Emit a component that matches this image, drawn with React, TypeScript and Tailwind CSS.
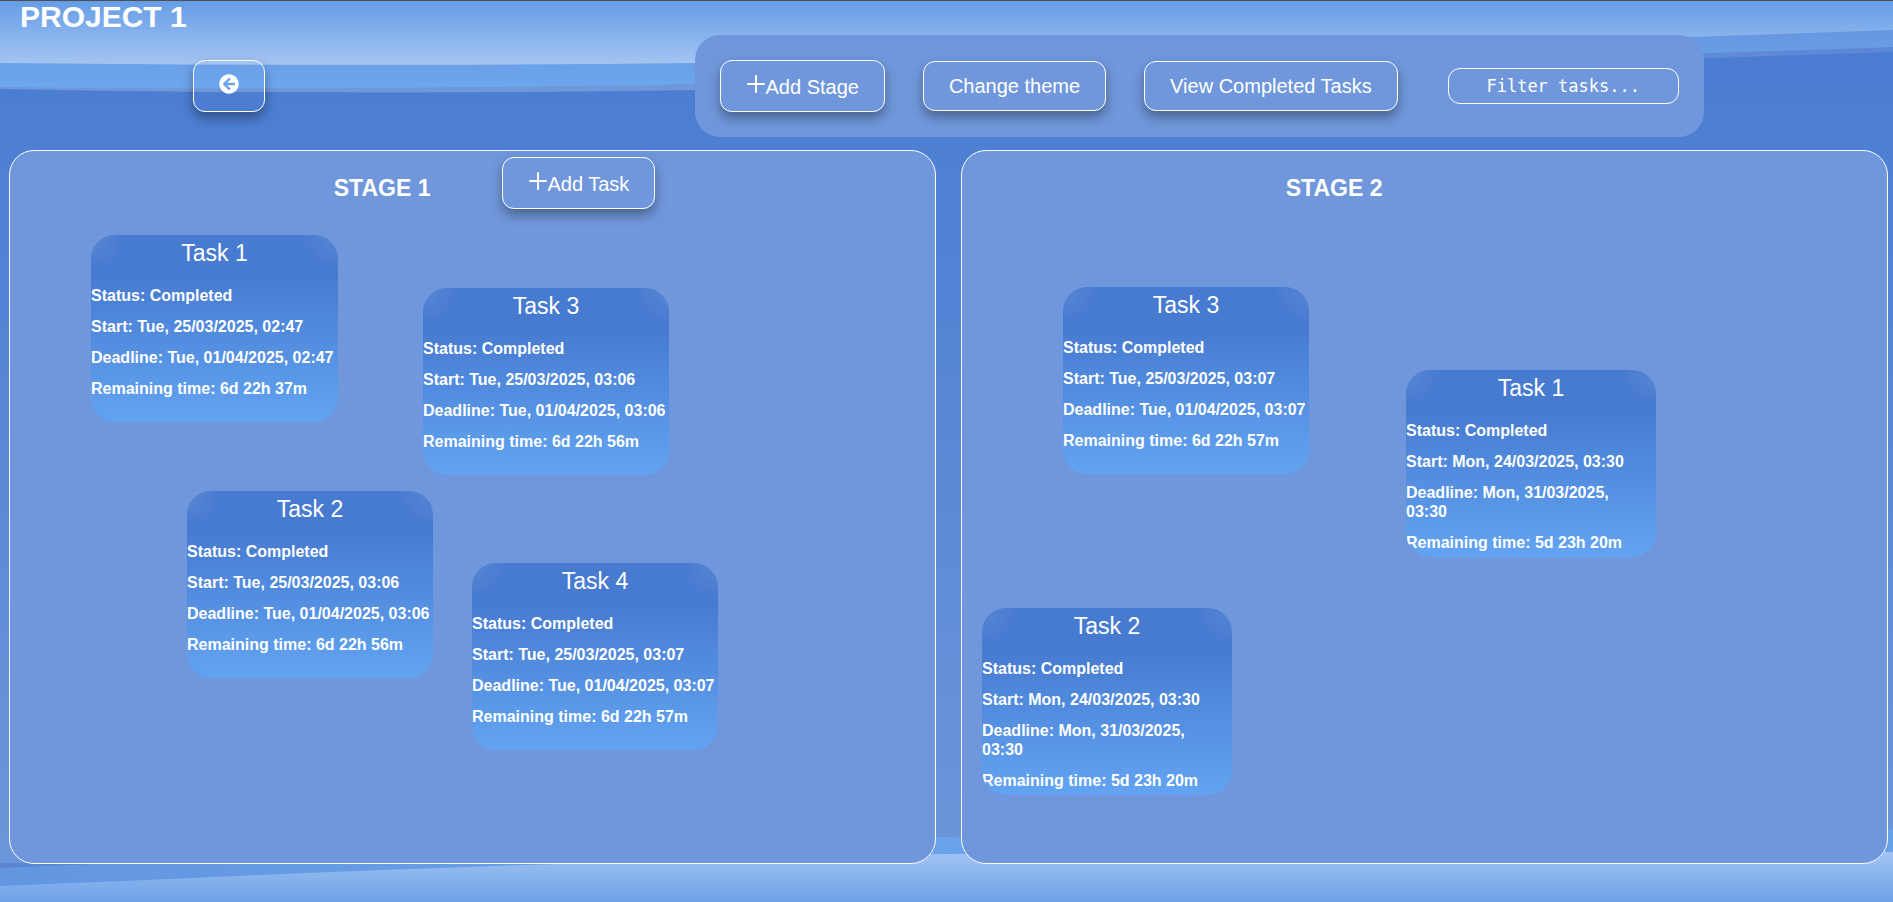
import React from "react";
import { FaArrowCircleLeft } from "react-icons/fa";

type Task = {
  name: string;
  start: string;
  deadline: string;
  remaining: string;
  x: number;
  y: number;
  width: number;
};

type Stage = { name: string; canAdd: boolean; tasks: Task[] };

const stages: Stage[] = [
  {
    name: "STAGE 1",
    canAdd: true,
    tasks: [
      { name: "Task 1", start: "Tue, 25/03/2025, 02:47", deadline: "Tue, 01/04/2025, 02:47", remaining: "6d 22h 37m", x: 81, y: 84, width: 247 },
      { name: "Task 3", start: "Tue, 25/03/2025, 03:06", deadline: "Tue, 01/04/2025, 03:06", remaining: "6d 22h 56m", x: 413, y: 137, width: 246 },
      { name: "Task 2", start: "Tue, 25/03/2025, 03:06", deadline: "Tue, 01/04/2025, 03:06", remaining: "6d 22h 56m", x: 177, y: 340, width: 246 },
      { name: "Task 4", start: "Tue, 25/03/2025, 03:07", deadline: "Tue, 01/04/2025, 03:07", remaining: "6d 22h 57m", x: 462, y: 412, width: 246 },
    ],
  },
  {
    name: "STAGE 2",
    canAdd: false,
    tasks: [
      { name: "Task 3", start: "Tue, 25/03/2025, 03:07", deadline: "Tue, 01/04/2025, 03:07", remaining: "6d 22h 57m", x: 101, y: 136, width: 246 },
      { name: "Task 1", start: "Mon, 24/03/2025, 03:30", deadline: "Mon, 31/03/2025, 03:30", remaining: "5d 23h 20m", x: 444, y: 219, width: 250 },
      { name: "Task 2", start: "Mon, 24/03/2025, 03:30", deadline: "Mon, 31/03/2025, 03:30", remaining: "5d 23h 20m", x: 20, y: 457, width: 250 },
    ],
  },
];

function Waves() {
  return (
    <svg
      className="absolute inset-0 -z-10 h-full w-full"
      viewBox="0 0 1893 902"
      preserveAspectRatio="none"
      aria-hidden="true"
    >
      <defs>
        <linearGradient id="sky" gradientUnits="userSpaceOnUse" x1="0" y1="0" x2="0" y2="64">
          <stop offset="0" stopColor="#669de7" />
          <stop offset="1" stopColor="#a5c5f1" />
        </linearGradient>
        <linearGradient id="deep" gradientUnits="userSpaceOnUse" x1="0" y1="50" x2="0" y2="865">
          <stop offset="0" stopColor="#4a7cd1" />
          <stop offset="0.2" stopColor="#4f81d4" />
          <stop offset="1" stopColor="#6c96d9" />
        </linearGradient>
        <linearGradient id="band" gradientUnits="userSpaceOnUse" x1="0" y1="25" x2="0" y2="92">
          <stop offset="0" stopColor="#6596e0" />
          <stop offset="1" stopColor="#6da8ef" />
        </linearGradient>
        <linearGradient id="haze" x1="0" y1="0" x2="1" y2="0">
          <stop offset="0" stopColor="#7097d9" />
          <stop offset="0.4" stopColor="#7097d9" />
          <stop offset="1" stopColor="#5b88d6" />
        </linearGradient>
        <linearGradient id="lowBand" x1="0" y1="0" x2="1" y2="0">
          <stop offset="0" stopColor="#6396e1" />
          <stop offset="0.5" stopColor="#6aa3ec" />
          <stop offset="1" stopColor="#66a0e9" />
        </linearGradient>
        <linearGradient id="shore" gradientUnits="userSpaceOnUse" x1="0" y1="852" x2="0" y2="902">
          <stop offset="0" stopColor="#a3c3f1" />
          <stop offset="0.5" stopColor="#87b3ec" />
          <stop offset="0.8" stopColor="#78a8eb" />
          <stop offset="1" stopColor="#6da2e8" />
        </linearGradient>
      </defs>
      <rect width="1893" height="902" fill="url(#deep)" />
      <path d="M0 0H1893V51C1500 64 1100 80 696 89C450 93 200 92 0 88Z" fill="url(#haze)" />
      <path d="M0 0H1893V46C1500 59 1100 74 696 83C450 88 200 88 0 86Z" fill="url(#band)" />
      <path d="M0 0H1893V29C1500 43 1100 55 696 62C450 65 200 64 0 62Z" fill="url(#sky)" />
      <path d="M0 863H400V902H0Z" fill="#5a86d4" />
      <path d="M0 868C300 855 650 839 945 837C1300 834 1600 830 1893 829V902H0Z" fill="url(#lowBand)" />
      <path d="M0 886C200 878 380 869 560 864C700 859 820 855 945 854C1300 853 1600 852 1893 852V902H0Z" fill="url(#shore)" />
    </svg>
  );
}

function PlusIcon() {
  return (
    <svg className="inline h-5 w-[19px] align-baseline" viewBox="0 0 19 20" aria-hidden="true">
      <path d="M10 2V18M2 10H18" stroke="currentColor" strokeWidth="2" strokeLinecap="round" />
    </svg>
  );
}

function Button({ children, icon = false, label }: { children: React.ReactNode; icon?: boolean; label?: string }) {
  return (
    <button
      type="button"
      aria-label={label}
      className={
        "cursor-pointer rounded-xl border border-white px-[25px] pb-3 text-xl leading-6 whitespace-nowrap text-white shadow-[0px_6px_12px_rgba(0,0,0,0.35)] " +
        (icon ? "pt-[13px]" : "pt-3")
      }
    >
      {children}
    </button>
  );
}

function TaskCard({ task }: { task: Task }) {
  return (
    <article
      className="absolute h-[187px] overflow-hidden rounded-3xl bg-[radial-gradient(circle_at_top_left,rgba(112,151,219,0.4),transparent_36px),radial-gradient(circle_at_top_right,rgba(112,151,219,0.4),transparent_36px),linear-gradient(to_bottom,#477bd0_0%,#477bd0_22%,#62a4f2_100%)]"
      style={{ left: task.x, top: task.y, width: task.width }}
    >
      <h3 className="pt-1 text-center text-[23px] leading-7">{task.name}</h3>
      <div className="mt-[19px] flex flex-col gap-3 pr-[3px] leading-[19px] font-bold">
        <p>Status: Completed</p>
        <p>{`Start: ${task.start}`}</p>
        <p>{`Deadline: ${task.deadline}`}</p>
        <p>{`Remaining time: ${task.remaining}`}</p>
      </div>
    </article>
  );
}

function StagePanel({ stage }: { stage: Stage }) {
  return (
    <section className="relative min-h-[680px] flex-1 rounded-[25px] border border-white bg-[#7097db]">
      <div className="flex items-start gap-[72px] pt-[6px] pl-[35%]">
        <h2 className="pt-4 text-[23px] leading-[30px] font-bold whitespace-nowrap">{stage.name}</h2>
        {stage.canAdd && (
          <Button icon>
            <PlusIcon />
            Add Task
          </Button>
        )}
      </div>
      {stage.tasks.map((task) => (
        <TaskCard key={task.name} task={task} />
      ))}
    </section>
  );
}

export default function App() {
  return (
    <div className="relative isolate flex min-h-screen flex-col border-t border-[#4d4f55] font-['Liberation_Sans',Arial,sans-serif] text-white">
      <Waves />
      <h1 className="pb-[2px] pl-5 text-[30px] leading-8 font-bold">PROJECT 1</h1>
      <header className="flex items-center justify-between pr-[10%] pl-[193px]">
        <Button icon label="Back">
          <FaArrowCircleLeft className="inline h-5 w-5 align-baseline" />
        </Button>
        <div className="flex items-center rounded-[25px] bg-[#7097db] p-[25px]">
          <div className="flex items-center gap-[38px]">
            <Button icon>
              <PlusIcon />
              Add Stage
            </Button>
            <Button>Change theme</Button>
            <Button>View Completed Tasks</Button>
          </div>
          <input
            type="text"
            aria-label="Filter tasks"
            placeholder="Filter tasks..."
            className="ml-[50px] h-9 w-[231px] rounded-xl border border-white bg-transparent text-center font-['DejaVu_Sans_Mono',monospace] text-[17px] outline-none placeholder:text-white"
          />
        </div>
      </header>
      <main className="mt-[13px] flex flex-1 gap-[25px] pr-[5px] pb-[38px] pl-[9px]">
        {stages.map((stage) => (
          <StagePanel key={stage.name} stage={stage} />
        ))}
      </main>
    </div>
  );
}
